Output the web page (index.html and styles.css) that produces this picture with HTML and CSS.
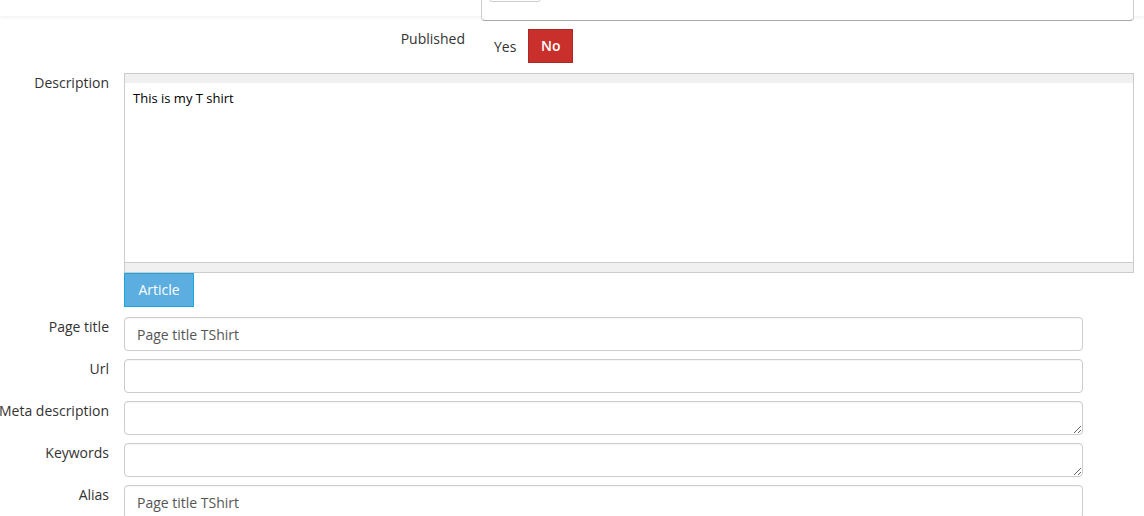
FILE: index.html
```html
<!DOCTYPE html>
<html>
<head>
  <link rel="stylesheet" href="styles.css">
</head>
<body>
  <div class="topbar"></div>
  <div class="dropdown">
    <span class="dropdown-chip"></span>
  </div>
  <form class="product-form">
    <div class="row row-published">
      <label class="row-label">Published</label>
      <div class="toggle">
        <span class="toggle-opt">Yes</span>
        <button type="button" class="toggle-opt active">No</button>
      </div>
    </div>
    <div class="row row-description">
      <label class="row-label">Description</label>
      <div class="editor">
        <div class="editor-toolbar"></div>
        <div class="editor-body">This is my T shirt</div>
        <div class="editor-status"></div>
      </div>
    </div>
    <div class="row row-article">
      <span class="row-label"></span>
      <button type="button" class="btn-article">Article</button>
    </div>
    <div class="row">
      <label class="row-label">Page title</label>
      <input class="field" type="text" value="Page title TShirt">
    </div>
    <div class="row">
      <label class="row-label">Url</label>
      <input class="field" type="text" value="">
    </div>
    <div class="row">
      <label class="row-label">Meta description</label>
      <textarea class="field" rows="1"></textarea>
    </div>
    <div class="row">
      <label class="row-label">Keywords</label>
      <textarea class="field" rows="1"></textarea>
    </div>
    <div class="row">
      <label class="row-label">Alias</label>
      <input class="field" type="text" value="Page title TShirt">
    </div>
  </form>
</body>
</html>
```

FILE: styles.css
```css
* {
  margin: 0;
  padding: 0;
  box-sizing: border-box;
}
body {
  background: #fff;
  font-family: "Open Sans", "Liberation Sans", sans-serif;
  font-size: 14px;
  color: #333;
  position: relative;
  overflow: hidden;
}
.topbar {
  height: 16px;
  background: #fff;
  box-shadow: 0 2px 3px rgba(0, 0, 0, 0.05);
}
/* open dropdown hanging from the header */
.dropdown {
  position: absolute;
  left: 481px;
  top: -2px;
  width: 653px;
  height: 23px;
  background: #fff;
  border: 1px solid #ccc;
  border-bottom-color: #a8a8a8;
  border-radius: 0 0 4px 4px;
}
.dropdown-chip {
  position: absolute;
  left: 7px;
  top: -20px;
  width: 52px;
  height: 23px;
  border: 1px solid #ccc;
  border-radius: 3px;
}
.product-form {
  padding-top: 13px;
}
.row {
  display: flex;
  align-items: flex-start;
  margin-bottom: 8px;
}
.row-label {
  flex: 0 0 124px;
  min-width: 0;
  display: flex;
  justify-content: flex-end;
  padding-right: 15px;
  line-height: 20px;
  white-space: nowrap;
  color: #333;
}
.row-published {
  margin-bottom: 10px;
}
.row-published .row-label {
  flex-basis: 482px;
  padding-right: 17px;
}
.toggle {
  display: flex;
}
.toggle-opt {
  height: 34px;
  padding: 1px 12px 0;
  line-height: 33px;
  font-family: inherit;
  font-size: 14px;
  color: #333;
  border: 0;
  background: none;
}
.toggle-opt.active {
  width: 45px;
  padding: 0;
  background: #c9302c;
  border: 1px solid #ac2925;
  color: #fff;
  font-weight: 600;
  line-height: 32px;
  text-align: center;
}
.row-description {
  margin-bottom: 0;
}
.editor {
  width: 1010px;
  height: 200px;
  border: 1px solid #ccc;
  display: flex;
  flex-direction: column;
}
.editor-toolbar {
  height: 9px;
  background: #f0f0f0;
}
.editor-body {
  flex: 1;
  padding: 6px 8px;
  font-size: 13px;
  line-height: 18px;
  color: #000;
}
.editor-status {
  height: 10px;
  background: #f0f0f0;
  border-top: 1px solid #ccc;
}
.row-article {
  margin-bottom: 10px;
}
.btn-article {
  width: 70px;
  height: 34px;
  padding-bottom: 2px;
  background: #5cade0;
  border: 1px solid #1da6de;
  color: #fff;
  font-family: inherit;
  font-size: 14px;
  font-weight: 400;
}
.field {
  display: block;
  width: 959px;
  height: 34px;
  padding: 6px 12px;
  border: 1px solid #ccc;
  border-radius: 4px;
  font-family: inherit;
  font-size: 14px;
  line-height: 20px;
  color: #555;
  background: #fff;
  box-shadow: inset 0 1px 1px rgba(0, 0, 0, 0.04);
  outline: none;
}
textarea.field {
  resize: vertical;
  overflow: hidden;
}
```
